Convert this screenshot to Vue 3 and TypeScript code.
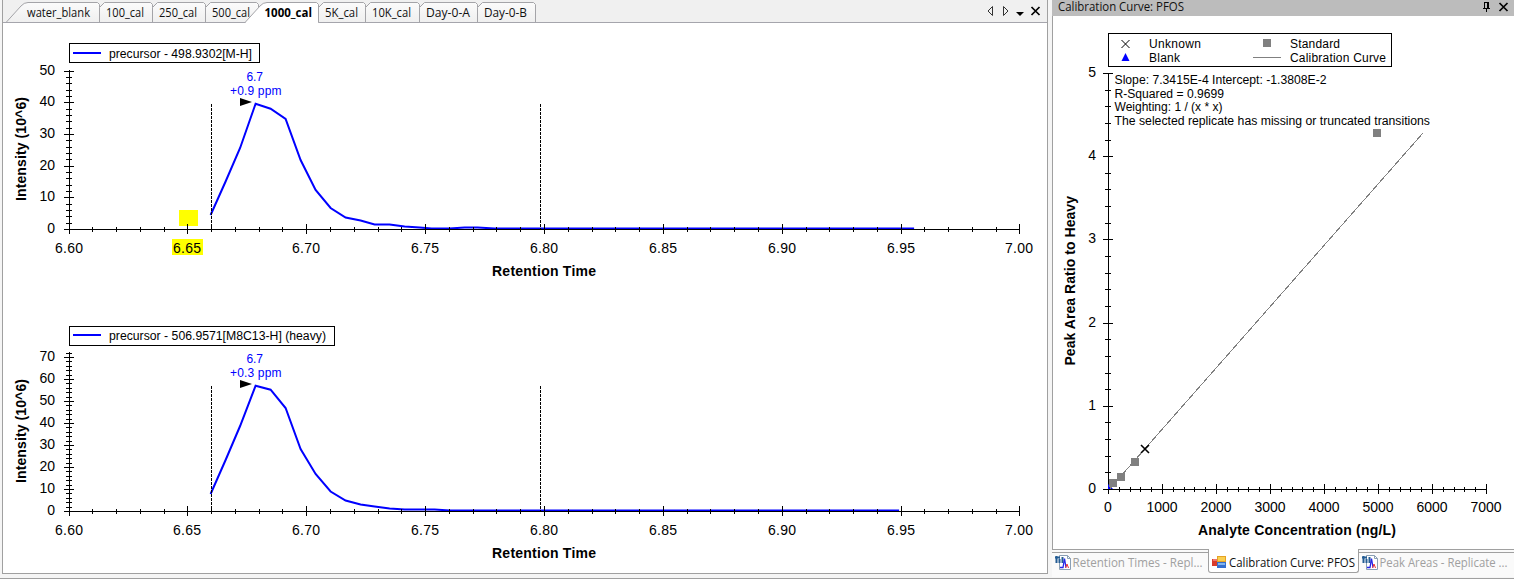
<script setup lang="ts">
interface Tick { pos: number; major: boolean }
interface Tab { label: string; start: number; width: number; textX: number; textW: number; active?: boolean; first?: boolean }
interface Chromatogram {
  top: number; axisY: number; axisTop: number; unit: number; max: number
  legend: string; legendY: number; keyY: number; legendW: number; legendTextW: number; ppm: string
  peakY: number; points: string; highlight: boolean
}

const tabs: Tab[] = [
  { label: 'water_blank', start: 3, width: 96, textX: 27, textW: 63, first: true },
  { label: '100_cal', start: 99, width: 53, textX: 106, textW: 38 },
  { label: '250_cal', start: 152, width: 53, textX: 159, textW: 38 },
  { label: '500_cal', start: 205, width: 53, textX: 212, textW: 38 },
  { label: '1000_cal', start: 258, width: 60, textX: 264.5, textW: 47.5, active: true },
  { label: '5K_cal', start: 318, width: 47, textX: 325, textW: 33 },
  { label: '10K_cal', start: 365, width: 54, textX: 372, textW: 39 },
  { label: 'Day-0-A', start: 419, width: 58, textX: 426, textW: 44 },
  { label: 'Day-0-B', start: 477, width: 58, textX: 484, textW: 43 },
]

function tabPath(t: Tab): string {
  const r = t.start + t.width + 0.5
  const end = `H${r - 2}L${r} 4.5V22.5`
  if (t.first) return `M6 22.5L21 6Q24 2.5 28 2.5${end}`
  if (t.active) return `M245 22.5L260 6Q263 2.5 267 2.5${end}`
  return `M${t.start + 0.5} 22.5V7.5L${t.start + 5.5} 2.5${end}`
}

const charts: Chromatogram[] = [
  {
    top: 23, axisY: 229, axisTop: 70, unit: 3.17, max: 50,
    legend: 'precursor - 498.9302[M-H]', legendY: 43, keyY: 53, legendW: 190, legendTextW: 143, ppm: '+0.9 ppm', peakY: 102, highlight: true,
    points: '211,215 226,181.5 240.5,148 256,103.7 271,108.7 286,119 301,160 316,190 331,208 346,217.5 361,220.5 375,224.5 390,224.5 405,226.5 420,227.5 432,228.5 450,228.5 465,227.5 478,227.5 495,228.5 914.5,228.5',
  },
  {
    top: 298, axisY: 511, axisTop: 352, unit: 2.2, max: 72,
    legend: 'precursor - 506.9571[M8C13-H] (heavy)', legendY: 326, keyY: 335, legendW: 265, legendTextW: 217, ppm: '+0.3 ppm', peakY: 384, highlight: false,
    points: '211,494 226,460 240.5,426 256,385.7 271,389.7 286,408 301,449 316,474 331,491.5 346,500.5 361,504.5 375,506.5 390,508.5 405,509.5 435,509.5 450,510.5 899.5,510.5',
  },
]

const timePos = (i: number) => Math.floor(69 + i * 23.775)
function ticks(count: number, at: (i: number) => number): Tick[] {
  return Array.from({ length: count + 1 }, (_, i) => ({ pos: Math.round(at(i)), major: i % 5 === 0 }))
}
const xTicks = ticks(40, i => (i === 40 ? 1019 : timePos(i)))
const timeLabels = Array.from({ length: 9 }, (_, i) => ({ text: (6.6 + i * 0.05).toFixed(2), x: i === 8 ? 1019 : timePos(i * 5) }))
const yTicks = (c: Chromatogram) => ticks(c.max / 2, i => c.axisY - i * 2 * c.unit)
const yLabels = (c: Chromatogram) =>
  Array.from({ length: Math.floor(c.max / 10) + 1 }, (_, i) => ({ text: String(i * 10), y: Math.round(c.axisY - i * 10 * c.unit) + 4 }))

const xPath = (list: Tick[], y: number) =>
  list.map(t => `M${t.pos + 0.5} ${y - (t.major ? 5 : 2)}v${t.major ? 10 : 5}`).join('')
const yPath = (list: Tick[], x: number) =>
  list.map(t => `M${x - (t.major ? 5 : 3)} ${t.pos + 0.5}h${t.major ? 10 : 6}`).join('')

const concTicks = ticks(35, i => 1108 + i * 10.8)
const ratioTicks = ticks(25, i => 489 - i * 16.64)
const standards = [[1113, 483], [1121, 477], [1135, 462], [1377, 133]]
const notes = [
  { text: 'Slope: 7.3415E-4 Intercept: -1.3808E-2', y: 84, w: 212 },
  { text: 'R-Squared = 0.9699', y: 98, w: 109.5 },
  { text: 'Weighting: 1 / (x * x)', y: 111, w: 108 },
  { text: 'The selected replicate has missing or truncated transitions', y: 125, w: 315.5 },
]
const panes = [
  { label: 'Retention Times - Repl...', width: 156, textW: 130 },
  { label: 'Calibration Curve: PFOS', width: 149, textW: 126, active: true },
  { label: 'Peak Areas - Replicate ...', width: 155, textW: 128 },
]
</script>

<template>
  <div class="window">
    <div class="workspace">
      <section class="documents">
        <svg class="tabstrip" width="1044" height="23" viewBox="3 0 1044 23">
          <defs>
            <linearGradient id="tabfill" x1="0" y1="0" x2="0" y2="1"><stop stop-color="#fbfbfb" /><stop offset="1" stop-color="#efefef" /></linearGradient>
          </defs>
          <g v-for="t in tabs.filter(t => !t.active)" :key="t.label">
            <path :d="tabPath(t)" fill="url(#tabfill)" stroke="#a4a4a8" />
            <text class="ui" :x="t.textX" y="17" :textLength="t.textW" lengthAdjust="spacingAndGlyphs">{{ t.label }}</text>
          </g>
          <path d="M3 22.5H1047" stroke="#a5a5ac" />
          <g v-for="t in tabs.filter(t => t.active)" :key="t.label">
            <path :d="tabPath(t)" fill="#fff" stroke="#a4a4a8" />
            <path d="M246 22.5H318" stroke="#fff" />
            <text class="ui bold" :x="t.textX" y="17" :textLength="t.textW" lengthAdjust="spacingAndGlyphs">{{ t.label }}</text>
          </g>
          <path d="M992.5 6.5V15.5L988 11Z M1003.5 6.5V15.5L1008 11Z" fill="none" stroke="#333" />
          <path d="M1016 12h8l-4 4Z" />
          <path d="M1031.5 7l8 8M1039.5 7l-8 8" stroke="#000" stroke-width="1.7" />
        </svg>
        <svg v-for="c in charts" :key="c.top" class="chart" width="1044" height="275" :viewBox="`3 ${c.top} 1044 275`">
          <g v-if="c.highlight" fill="#ff0"><rect x="179" y="210" width="19" height="16" /><rect x="172" y="239" width="31" height="16" /></g>
          <polyline class="trace" :points="c.points" transform="translate(-0.4 0)" />
          <g class="crisp">
            <path :d="`M69.5 ${c.axisTop}V${c.axisY + 5}M64 ${c.axisY + 0.5}H1020`" />
            <path :d="xPath(xTicks, c.axisY)" />
            <path :d="yPath(yTicks(c), 69)" />
            <path :d="`M211.5 ${c.peakY + 2}V${c.axisY}M540.5 ${c.peakY + 2}V${c.axisY}`" stroke-dasharray="3 1" />
            <rect x="69.5" :y="c.legendY + 0.5" :width="c.legendW" height="19" />
          </g>
          <path :d="`M73 ${c.keyY}h28`" stroke="#00f" stroke-width="2" />
          <text class="small" x="109" :y="c.keyY + 5" :textLength="c.legendTextW" lengthAdjust="spacingAndGlyphs">{{ c.legend }}</text>
          <path :d="`M240 ${c.peakY - 4}L252 ${c.peakY}L240 ${c.peakY + 4}Z`" />
          <g class="small blue">
            <text x="246.5" :y="c.peakY - 21" textLength="16.5">6.7</text>
            <text x="230" :y="c.peakY - 7" textLength="51.5">{{ c.ppm }}</text>
          </g>
          <g class="axis">
            <text v-for="l in timeLabels" :key="l.text" :x="l.x - 14" :y="c.axisY + 24" textLength="28">{{ l.text }}</text>
            <text v-for="l in yLabels(c)" :key="l.text" x="55" :y="l.y" text-anchor="end">{{ l.text }}</text>
          </g>
          <text class="axis bold" x="492" :y="c.axisY + 47" textLength="104">Retention Time</text>
          <text class="axis bold" :transform="`translate(26 ${c.axisY - 28}) rotate(-90)`" textLength="104">Intensity (10^6)</text>
        </svg>
      </section>

      <section class="calibration">
        <header class="titlebar">
          <svg width="462" height="16" viewBox="1052 0 462 16">
            <text class="ui" x="1058" y="11" textLength="126" lengthAdjust="spacingAndGlyphs">Calibration Curve: PFOS</text>
            <g class="crisp"><path d="M1484.5 2V8M1484 2.5H1489M1488 2V8M1483 8.5H1490M1486.5 8V12" /><path d="M1487.5 3V8" /></g>
            <path d="M1499.5 3l8 8M1507.5 3l-8 8" stroke="#000" stroke-width="1.7" />
          </svg>
        </header>
        <svg class="curve" width="461" height="533" viewBox="1053 16 461 533">
          <g class="crisp">
            <rect x="1108.5" y="33.5" width="283" height="33" />
            <path d="M1108.5 73V494M1103 489.5H1487" />
            <path :d="xPath(concTicks, 489)" />
            <path :d="yPath(ratioTicks, 1108)" />
          </g>
          <path d="M1108 484L1113 489H1108Z" fill="#00f" />
          <path class="fit" d="M1110 488.5L1423 133M1253 57.5H1281" />
          <g fill="#808080">
            <rect v-for="p in standards" :key="p[0]" :x="p[0] - 4" :y="p[1] - 4" width="8" height="8" />
            <rect x="1263" y="39" width="8" height="8" />
          </g>
          <path d="M1141 445l8 8M1149 445l-8 8" stroke="#000" stroke-width="1.6" />
          <path d="M1121.5 40l8 8M1129.5 40l-8 8" stroke="#000" />
          <path d="M1125.5 53L1129.5 61H1121.5Z" fill="#00f" />
          <g class="small">
            <text x="1149" y="48" textLength="52">Unknown</text><text x="1149" y="62" textLength="31">Blank</text>
            <text x="1290" y="48" textLength="50">Standard</text><text x="1290" y="62" textLength="96">Calibration Curve</text>
            <text v-for="n in notes" :key="n.y" x="1114.5" :y="n.y" :textLength="n.w" lengthAdjust="spacingAndGlyphs">{{ n.text }}</text>
          </g>
          <g class="axis">
            <text v-for="i in 8" :key="i" :x="1108 + (i - 1) * 54" y="512" text-anchor="middle">{{ (i - 1) * 1000 }}</text>
            <text v-for="i in 6" :key="i" x="1096" :y="Math.round(489 - (i - 1) * 83.2) + 4" text-anchor="end">{{ i - 1 }}</text>
          </g>
          <text class="axis bold" x="1198" y="535" textLength="198">Analyte Concentration (ng/L)</text>
          <text class="axis bold" transform="translate(1075 365.5) rotate(-90)" textLength="169.5">Peak Area Ratio to Heavy</text>
        </svg>
        <nav class="panes">
          <div v-for="p in panes" :key="p.label" :class="['pane', { active: p.active }]">
            <svg :width="p.width" height="22" :viewBox="`0 0 ${p.width} 22`">
              <g v-if="p.active">
                <rect x="3" y="10" width="7" height="7" fill="#d83b2c" />
                <path d="M4 10h5v2H4Z" fill="#ed7770" />
                <rect x="8.5" y="7.5" width="8" height="5" fill="#f9cf50" stroke="#e5a225" />
                <rect x="8" y="13" width="9" height="6" fill="#356fce" /><path d="M9 14h7v2H9Z" fill="#83b5ed" />
              </g>
              <g v-else fill="none">
                <path d="M7.5 2.5h8l3 3v11h-11Z" fill="#fff" stroke="#8a9fb5" />
                <path d="M15.5 2.5v3h3" stroke="#8a9fb5" />
                <path d="M3 4.5h5M4.5 3v7M7.5 6v4M10.5 4v6" stroke="#245d94" stroke-width="2" />
                <path d="M8 14.5h3l1.5-9 1.5 9" stroke="#2727e8" stroke-width="1.3" />
                <path d="M13.5 15l1.5-4 1.5 4" stroke="#e33" />
              </g>
              <text :class="['ui', { dim: !p.active }]" :x="p.active ? 20 : 20.5" :y="p.active ? 18 : 14" :textLength="p.textW" lengthAdjust="spacingAndGlyphs">{{ p.label }}</text>
            </svg>
          </div>
        </nav>
      </section>
    </div>
  </div>
</template>

<style>
body { margin: 0; overflow: hidden; }
</style>
<style scoped>
.window { box-sizing: border-box; width: 1514px; height: 579px; background: #f5f5f5; border-bottom: 1px solid #a0a0a0; }
.workspace { display: flex; gap: 4px; height: 578px; }
.documents { box-sizing: border-box; width: 1046px; height: 574px; margin-left: 2px; background: #fff; border: solid #a0a0a0; border-width: 0 1px 1px; }
svg { display: block; overflow: visible; }
.tabstrip { background: #f0f0f0; }
.calibration { width: 462px; height: 577px; background: #fafafa; }
.titlebar { height: 16px; background: #bcbcbc; }
.curve { background: #fff; border-left: 1px solid #a0a0a0; border-bottom: 1px solid #a0a0a0; }
.panes { display: flex; }
.pane { box-sizing: border-box; height: 23px; margin-top: 2px; border-top: 1px solid #a0a0a0; }
.pane.active { margin-top: -1px; height: 24px; background: #fff; border: solid #a0a0a0; border-width: 0 1px 1px; border-radius: 0 0 3px 3px; }
.ui { font: 12px "Open Sans", "Noto Sans", sans-serif; fill: #111; }
.ui.dim { fill: #a0a0a0; }
.small { font: 12px "Liberation Sans", Arial, sans-serif; fill: #000; }
.blue { fill: #00f; }
.axis { font: 14px "Liberation Sans", Arial, sans-serif; fill: #000; }
.ui.bold { font-weight: 700; fill: #000; }
.axis.bold { font-weight: 700; }
.crisp { shape-rendering: crispEdges; fill: none; stroke: #000; stroke-width: 1; }
.fit { fill: none; stroke: #808080; shape-rendering: crispEdges; }
.trace { fill: none; stroke: #00f; stroke-width: 2; }
</style>
